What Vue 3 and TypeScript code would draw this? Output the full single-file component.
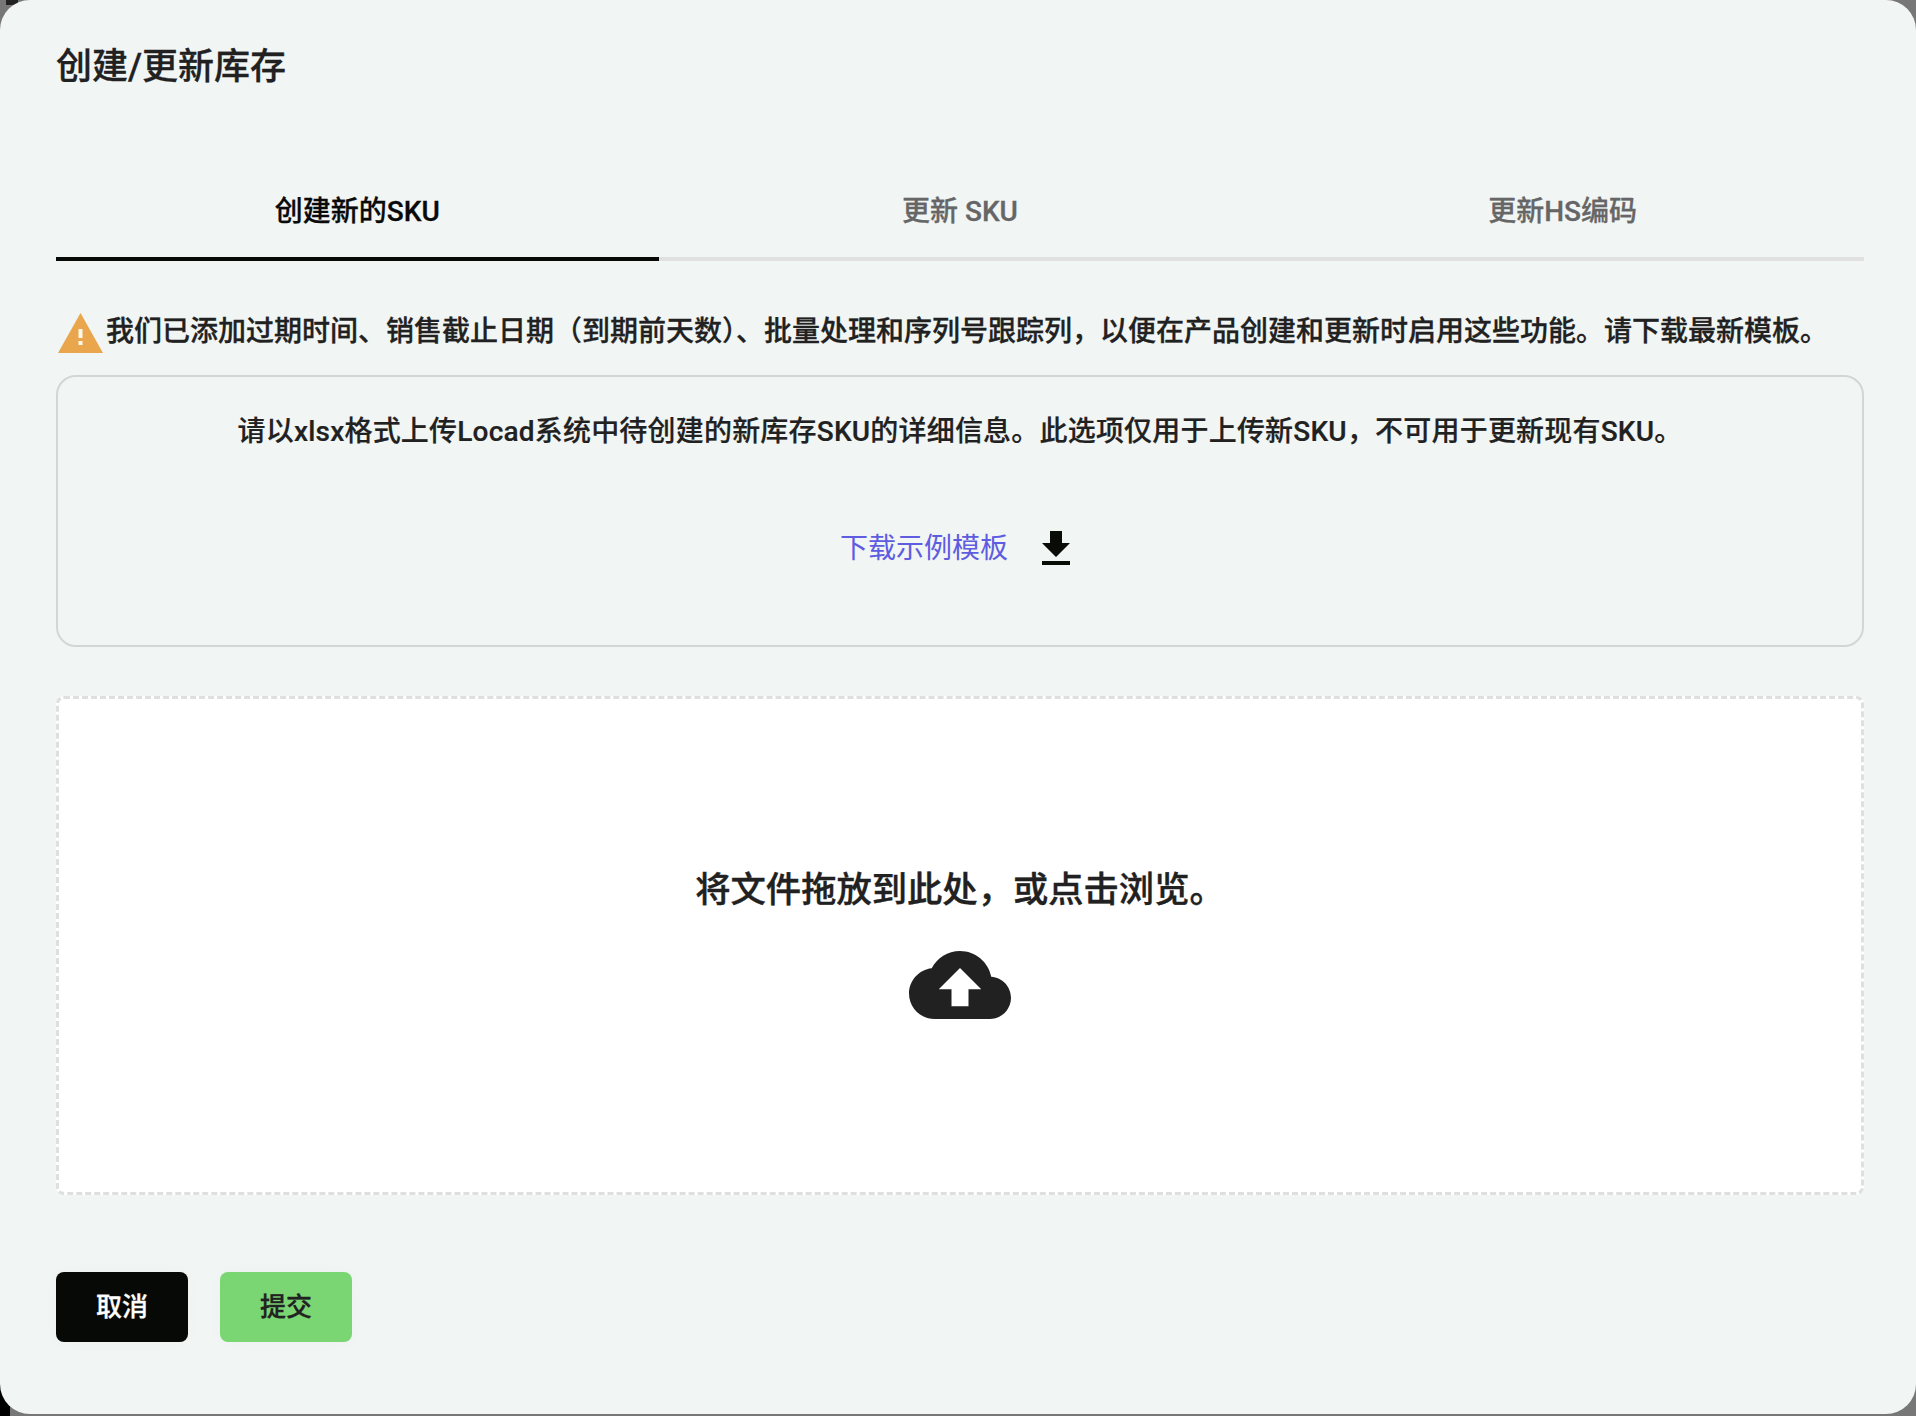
<script setup lang="ts">
const tabs: string[] = ['创建新的SKU', '更新 SKU', '更新HS编码']
</script>

<template>
  <div class="stage">
    <div class="corner-dark-tl"></div>
    <div class="corner-dark-bl"></div>
    <main class="panel">
      <h1 class="title">创建/更新库存</h1>
      <nav class="tabs">
        <div v-for="(t, i) in tabs" :key="t" class="tab" :class="{ active: i === 0 }">{{ t }}</div>
      </nav>
      <div class="notice">
        <svg class="warn" viewBox="0 0 45 40" width="45" height="40">
          <path d="M22.5 0L45 40H0z" fill="#eaa64d" />
          <rect x="20.5" y="16" width="4" height="9" fill="#fff" opacity=".9" />
          <rect x="20.5" y="28" width="4" height="4" fill="#fff" opacity=".9" />
        </svg>
        <span class="notice-text">我们已添加过期时间、销售截止日期（到期前天数）、批量处理和序列号跟踪列，以便在产品创建和更新时启用这些功能。请下载最新模板。</span>
      </div>
      <section class="info">
        <p class="info-text">请以xlsx格式上传Locad系统中待创建的新库存SKU的详细信息。此选项仅用于上传新SKU，不可用于更新现有SKU。</p>
        <div class="download">
          <a class="link">下载示例模板</a>
          <svg class="dl-icon" viewBox="0 0 24 24" width="48" height="48">
            <path d="M19 9h-4V3H9v6H5l7 7 7-7zM5 18v2h14v-2H5z" fill="#0a0c08" />
          </svg>
        </div>
      </section>
      <section class="drop">
        <p class="drop-text">将文件拖放到此处，或点击浏览。</p>
        <svg class="cloud" viewBox="0 0 24 24" width="102" height="102">
          <path d="M19.35 10.04C18.67 6.59 15.64 4 12 4 9.11 4 6.6 5.64 5.35 8.04 2.34 8.36 0 10.91 0 14c0 3.31 2.69 6 6 6h13c2.76 0 5-2.24 5-5 0-2.64-2.05-4.78-4.65-4.96zM14 13v4h-4v-4H7l5-5 5 5h-3z" fill="#212121" />
        </svg>
      </section>
      <footer class="actions">
        <button class="btn cancel">取消</button>
        <button class="btn submit">提交</button>
      </footer>
    </main>
  </div>
</template>

<style>
html, body { margin: 0; background: #777; }
</style>

<style scoped>
.stage {
  position: relative;
  width: 1916px;
  height: 1416px;
  overflow: hidden;
  background: #777;
  font-family: Roboto, "Noto Sans CJK SC", sans-serif;
  color: #212121;
}
.corner-dark-tl {
  position: absolute;
  left: 6px;
  top: 0;
  width: 12px;
  height: 5px;
  background: #222;
}
.corner-dark-bl {
  position: absolute;
  left: 0;
  bottom: 0;
  width: 10px;
  height: 32px;
  background: #000;
}
.panel {
  position: relative;
  box-sizing: border-box;
  width: 1916px;
  height: 1414px;
  padding: 0 52px 0 56px;
  background: #f1f5f4;
  border-radius: 30px;
  display: flex;
  flex-direction: column;
}
.title {
  margin: 41px 0 0;
  font-size: 36px;
  line-height: 52px;
  font-weight: 500;
  -webkit-text-stroke: .3px currentColor;
}
.tabs {
  display: grid;
  grid-template-columns: repeat(3, 1fr);
  margin-top: 72px;
}
.tab {
  height: 96px;
  box-sizing: border-box;
  border-bottom: 4px solid #e0e0e0;
  display: flex;
  align-items: center;
  justify-content: center;
  font-size: 28px;
  font-weight: 500;
  -webkit-text-stroke: .3px currentColor;
  color: #666;
  padding-bottom: 5px;
}
.tab.active {
  color: #0a0a0a;
  border-bottom-color: #070906;
}
.notice {
  display: flex;
  align-items: flex-end;
  gap: 3px;
  margin-top: 51px;
  padding-left: 2px;
  font-size: 28px;
  line-height: 40px;
  font-weight: 500;
  white-space: nowrap;
}
.notice-text {
  margin-bottom: 1px;
  -webkit-text-stroke: .3px currentColor;
}
.warn { flex: none; }
.info {
  box-sizing: border-box;
  height: 272px;
  margin-top: 22px;
  border: 2px solid #d4d6d6;
  border-radius: 20px;
  display: flex;
  flex-direction: column;
  align-items: center;
}
.info-text {
  margin: 34px 0 0;
  font-size: 28px;
  line-height: 42px;
  font-weight: 500;
  letter-spacing: .2px;
  -webkit-text-stroke: .2px currentColor;
}
.download {
  display: flex;
  align-items: center;
  gap: 24px;
  margin-top: 72px;
}
.link {
  font-size: 28px;
  line-height: 48px;
  color: #5e5ce0;
}
.drop {
  box-sizing: border-box;
  height: 499px;
  margin-top: 49px;
  background: #fff;
  border: 3px dashed #dfdfdf;
  border-radius: 8px;
  display: flex;
  flex-direction: column;
  align-items: center;
}
.drop-text {
  margin: 166px 0 0;
  font-size: 35.3px;
  line-height: 50px;
  font-weight: 500;
  -webkit-text-stroke: .4px currentColor;
}
.cloud { margin-top: 19px; }
.actions {
  display: flex;
  gap: 32px;
  margin-top: 77px;
}
.btn {
  width: 132px;
  height: 70px;
  border: 0;
  border-radius: 8px;
  padding: 0 0 5px;
  font: 500 26px Roboto, "Noto Sans CJK SC", sans-serif;
  -webkit-text-stroke: .3px currentColor;
  box-shadow: 0 0 20px rgba(0, 0, 0, .02);
}
.cancel { background: #070906; color: #fff; }
.submit { background: #7ad673; color: #212121; }
</style>
